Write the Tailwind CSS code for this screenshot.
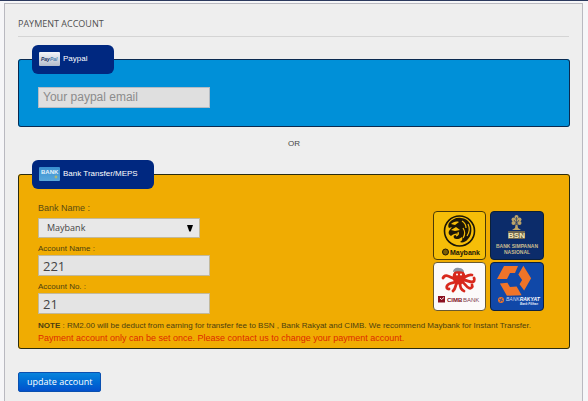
<!DOCTYPE html>
<html lang="en">
<head>
    <meta charset="UTF-8">
    <meta name="viewport" content="width=device-width, initial-scale=1.0">
    <title>Payment Account</title>
    <script src="https://cdn.jsdelivr.net/npm/@tailwindcss/browser@4"></script>
</head>
<body class="min-h-screen flex flex-col bg-[#f6f6f8] border-t border-[#2c3a5e] font-['Liberation_Sans',Arial,sans-serif] text-[#444444]">

    <!-- Payment card -->
    <main class="grow mt-0.5 ml-1 mr-[5px] border border-b-0 border-[#b9b9c0] bg-[#eeeeee] px-[13px] pt-3">
        <h1 class="h-[21px] border-b border-[#d4d4d4] font-['Open_Sans',sans-serif] text-[9px] leading-4 text-[#505050]">PAYMENT ACCOUNT</h1>

        <form class="mr-[-1px]">
            <!-- Paypal -->
            <fieldset class="mt-2 rounded-[3px] border border-[#0a2a50] bg-[#0090d8] px-[19px] pb-[18px]">
                <legend class="-ml-1.5 flex h-[29px] w-[82px] items-center gap-[3px] rounded-md bg-[#002880] px-[7px] pb-0.5 text-[8px] whitespace-nowrap text-white">
                    <svg class="h-3.5 w-[21px] shrink-0" viewBox="0 0 21 14">
                        <defs>
                            <linearGradient id="card" x1="0" y1="0" x2="0" y2="1">
                                <stop offset="0" stop-color="#f4f6fa"/>
                                <stop offset="1" stop-color="#b4bccb"/>
                            </linearGradient>
                        </defs>
                        <rect width="21" height="14" rx="1" fill="url(#card)"/>
                        <text x="2" y="9" font-size="5" font-weight="bold" font-style="italic" fill="#17305f">Pay<tspan fill="#4a7fae">Pal</tspan></text>
                    </svg>
                    Paypal
                </legend>
                <input type="email" aria-label="Your paypal email" placeholder="Your paypal email" class="mt-[13px] block h-[21px] w-[172px] border border-[#b4bcc4] bg-[#dfdfdf] px-1 pb-0.5 text-[12px] leading-4 placeholder:text-[#8c8c8c]">
            </fieldset>

            <p class="my-[9px] text-center text-[8px] leading-[15px]">OR</p>

            <!-- Bank transfer -->
            <fieldset class="rounded-[3px] border border-[#2a2c10] bg-[#f0ac02] px-[19px] pb-[3px]">
                <legend class="-ml-1.5 flex h-[29px] w-[122px] items-center gap-[3px] rounded-md bg-[#002880] px-[7px] pb-0.5 text-[8px] whitespace-nowrap text-white">
                    <svg class="h-3.5 w-[21px] shrink-0" viewBox="0 0 21 14">
                        <defs>
                            <linearGradient id="bank" x1="0" y1="0" x2="0" y2="1">
                                <stop offset="0" stop-color="#3a8fd0"/>
                                <stop offset="1" stop-color="#58a8dc"/>
                            </linearGradient>
                        </defs>
                        <rect width="21" height="14" rx="1" fill="url(#bank)"/>
                        <text x="2" y="7" font-size="6" font-weight="bold" fill="#e4f3fc">BANK</text>
                        <circle cx="17" cy="10" r="1.4" fill="#a9b878"/>
                    </svg>
                    Bank Transfer/MEPS
                </legend>

                <div class="flex items-start justify-between">
                    <div class="pt-3">
                        <label for="bankName" class="block text-[9px] leading-[14px] text-[#5a4a12]">Bank Name :</label>
                        <div class="relative mt-[3px] w-[162px]">
                            <select id="bankName" class="block h-5 w-full appearance-none border border-[#c2b99c] bg-[#e8e8e8] px-2 font-['Open_Sans',sans-serif] text-[9px]">
                                <option>Maybank</option>
                                <option>BSN</option>
                                <option>CIMB</option>
                                <option>Bank Rakyat</option>
                            </select>
                            <svg class="pointer-events-none absolute top-1.5 right-1.5 size-2" viewBox="0 0 8 8"><path d="M1 1h6L4.700 7.500h-1.400z" fill="#000000"/></svg>
                        </div>
                        <label for="accountName" class="mt-1 block text-[8px] leading-[13px] text-[#4c3f10]">Account Name :</label>
                        <input type="text" id="accountName" value="221" class="block h-[21px] w-[172px] border border-[#c2b99c] bg-[#e4e4e4] px-1 font-['Open_Sans',sans-serif] text-[13px] leading-4">
                        <label for="accountNo" class="mt-1 block text-[8px] leading-[13px] text-[#4c3f10]">Account No. :</label>
                        <input type="text" id="accountNo" value="21" class="block h-[21px] w-[172px] border border-[#c2b99c] bg-[#e4e4e4] px-1 font-['Open_Sans',sans-serif] text-[13px] leading-4">
                    </div>

                    <!-- Supported banks -->
                    <div class="mt-[22px] mr-1.5 grid grid-cols-2 gap-x-[3px] gap-y-0.5">
                        <svg class="h-[49px] w-[53px]" viewBox="0 0 53 49" role="img" aria-label="Maybank">
                            <rect x=".5" y=".5" width="52" height="48" rx="3.500" fill="#f6be08" stroke="#4a3a08"/>
                            <circle cx="26.500" cy="20" r="15" fill="none" stroke="#1c1606" stroke-width="1.600"/>
                            <path d="M16 12c3-4 8-6 12-5 5 0 9 4 10 8 1 5 0 10-3 13-2 3-6 4-8 3 2-1 3-3 2-5-2 2-6 3-8 1-1-2 0-3 2-3l3-1c-3-1-6 0-8 2-2-1-3-3-2-5l3-4-3 1c-1-1-1-3 0-5z" fill="#1c1606"/>
                            <path d="M18 13c2-2 5-3 8-2l-4 3zM18 19l5-3 4 3-5 1z" fill="#f6be08"/>
                            <path d="M29 10c3 2 4 4 4 7M30 17c2 3 2 7 0 10M35 13c2 4 1 9-1 12M25 21c1 2 0 3-2 4" fill="none" stroke="#f6be08" stroke-width="1.200"/>
                            <circle cx="12.500" cy="41" r="3" fill="#7a5e06" stroke="#1c1606"/>
                            <text x="17" y="43.500" font-size="7" font-weight="bold" fill="#1c1606">Maybank</text>
                        </svg>
                        <svg class="h-[49px] w-[54px]" viewBox="0 0 54 49" role="img" aria-label="Bank Simpanan Nasional">
                            <rect x=".5" y=".5" width="53" height="48" rx="3.500" fill="#0c2c6a" stroke="#0c2038"/>
                            <g fill="#bca468">
                                <circle cx="26.500" cy="6" r="2"/>
                                <circle cx="23.500" cy="8.500" r="2"/>
                                <circle cx="29.500" cy="8.500" r="2"/>
                                <circle cx="23.500" cy="12" r="2"/>
                                <circle cx="29.500" cy="12" r="2"/>
                                <circle cx="26.500" cy="10" r="2"/>
                                <path d="M26 11h1l1 6 3 2h-9l3-2z"/>
                            </g>
                            <path d="M24 9l2.500 3 2.500-3M26.500 6v8" fill="none" stroke="#0c2c6a" stroke-width=".6"/>
                            <rect x="18" y="20" width="17" height="8" fill="#6e6650"/>
                            <text x="26.500" y="27" text-anchor="middle" font-size="8" font-weight="bold" fill="#f4e6b4">BSN</text>
                            <text x="27" y="36.500" text-anchor="middle" font-size="5" font-weight="bold" fill="#c9bc90">BANK SIMPANAN</text>
                            <text x="27" y="43" text-anchor="middle" font-size="5" font-weight="bold" fill="#c9bc90">NASIONAL</text>
                        </svg>
                        <svg class="h-[49px] w-[53px]" viewBox="0 0 53 49" role="img" aria-label="CIMB Bank">
                            <rect x=".5" y=".5" width="52" height="48" rx="3.500" fill="#fcfafa" stroke="#6a5a30"/>
                            <g fill="none" stroke="#d8281c" stroke-width="2.800" stroke-linecap="round">
                                <path d="M24 17c-4 0-6-2-9-3-2-1-4 0-5 2"/>
                                <path d="M23 20c-4 1-8 1-9 4-1 2 0 3 2 3"/>
                                <path d="M24 21c-2 2-1 6-4 8"/>
                                <path d="M27 21c0 4 1 7 4 8"/>
                                <path d="M29 20c3 1 4 5 7 6 2 1 4-1 3-3"/>
                                <path d="M30 18c4 0 6 2 9 2 2 0 3-2 2-4"/>
                                <path d="M30 16c3-1 5-4 9-3"/>
                            </g>
                            <ellipse cx="26" cy="15" rx="6.500" ry="7.500" fill="#d8281c"/>
                            <path d="M20 10c0-3 3-5 6-4 3 0 5 2 5 4-3-1-8-1-11 0z" fill="#8c93a0"/>
                            <circle cx="24" cy="12.500" r="1" fill="#ffffff"/>
                            <circle cx="28" cy="12.500" r="1" fill="#ffffff"/>
                            <rect x="5" y="34" width="7" height="6.500" fill="#8a1020"/>
                            <path d="M7 36l1.500 1.500L11 35.500" fill="none" stroke="#ffffff" stroke-width=".9"/>
                            <text x="14" y="40" font-size="6" font-weight="bold" fill="#80101c">CIMB</text>
                            <text x="30" y="40" font-size="6" fill="#80404c">BANK</text>
                        </svg>
                        <svg class="h-[49px] w-[54px]" viewBox="0 0 54 49" role="img" aria-label="Bank Rakyat">
                            <rect x=".5" y=".5" width="53" height="48" rx="3.500" fill="#1048a8" stroke="#0c2040"/>
                            <g fill="#f07428">
                                <path d="M14 4h14l-3 7h-5l-3 6H7z"/>
                                <path d="M14 4h14l-3 7h-5l-3 6H7z" transform="rotate(120 24 18)"/>
                                <path d="M14 4h14l-3 7h-5l-3 6H7z" transform="rotate(240 24 18)"/>
                                <circle cx="11" cy="38" r="3"/>
                            </g>
                            <path d="M9 37l4 2M12 36l-2 4" stroke="#1048a8" stroke-width=".8"/>
                            <text x="16" y="38.500" font-size="5" font-style="italic" fill="#c9d6ee">BANK<tspan font-weight="bold" fill="#ffffff">RAKYAT</tspan></text>
                            <text x="30" y="43" font-size="3" font-style="italic" font-weight="bold" fill="#e4ebf8">Bank Pilihan</text>
                        </svg>
                    </div>
                </div>

                <p class="mt-[5px] text-[8px] leading-[13px] text-[#4c3f10]"><span class="font-bold">NOTE</span> : RM2.00 will be deduct from earning for transfer fee to BSN , Bank Rakyat and CIMB. We recommend Maybank for Instant Transfer.</p>
                <p class="text-[9px] leading-[13px] text-[#dd2a00]">Payment account only can be set once. Please contact us to change your payment account.</p>
            </fieldset>

            <button type="submit" class="mt-[23px] block h-5 rounded-xs border border-[#0a50b0] bg-linear-to-b from-[#0a84dc] to-[#0450cc] px-2 font-['Open_Sans',sans-serif] text-[9px] leading-4 text-white">update account</button>
        </form>
    </main>

</body>
</html>
